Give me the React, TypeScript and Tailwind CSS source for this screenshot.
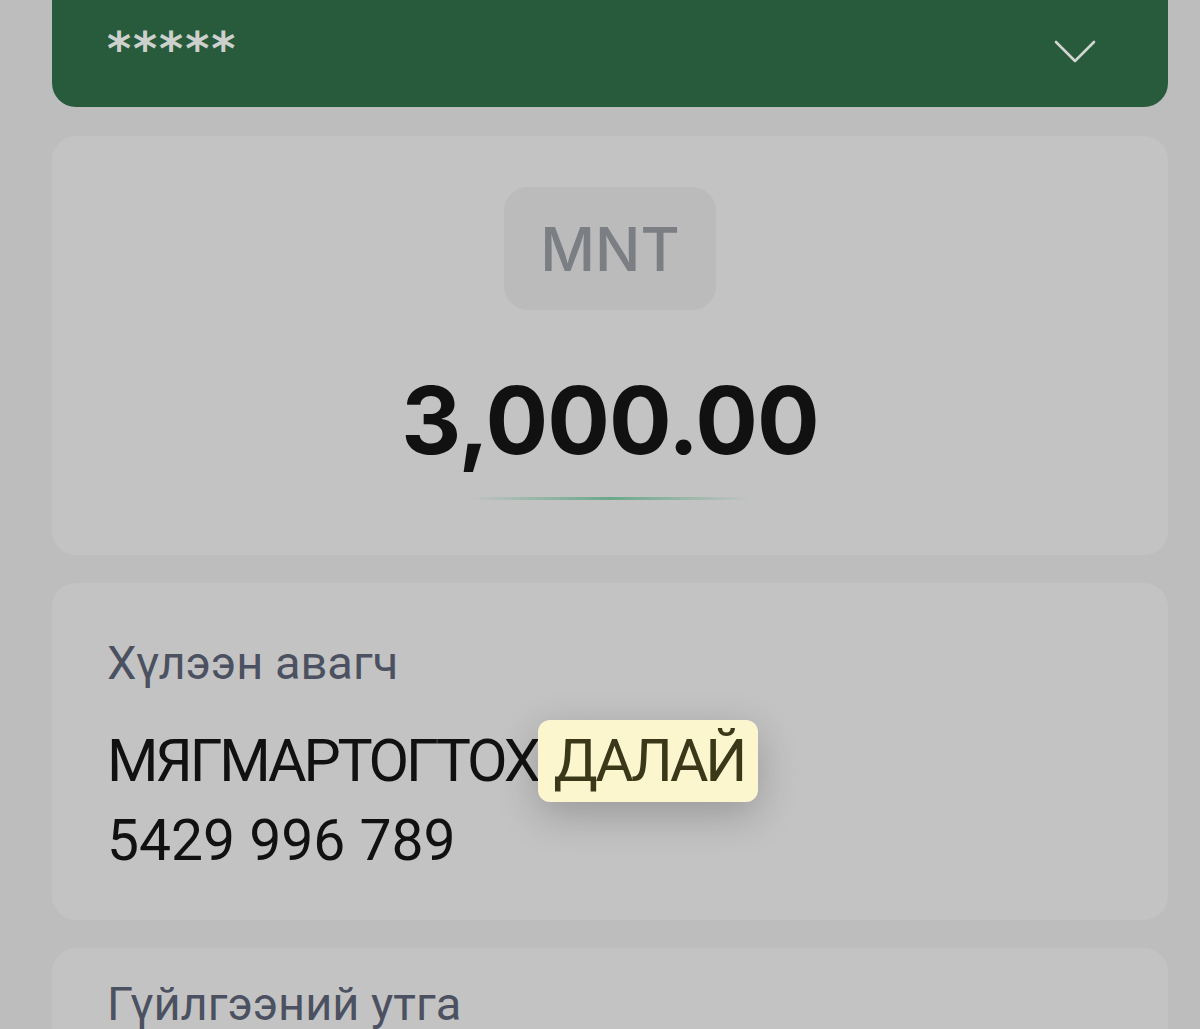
import React from 'react';

const Chevron = () => (
  <svg width="42" height="26" viewBox="0 0 42 26" fill="none" className="block">
    <polyline points="2,3 21,22 40,3" stroke="#d2d4d2" strokeWidth="2.6" strokeLinecap="round" strokeLinejoin="round" />
  </svg>
);

export default function App() {
  return (
    <div className="w-full h-[1029px] overflow-hidden bg-[#bdbdbd] pl-[52px] pr-[32px]" style={{ fontFamily: 'Inter, "Noto Sans", sans-serif' }}>
      {/* account selector */}
      <div className="mt-[-40px] h-[147px] rounded-[24px] bg-[#275b3b] flex items-end justify-between pl-[55px] pr-[72px] pb-[42px]">
        <span className="text-[46px] font-bold leading-none text-[#cdd1cd] tracking-[2px] mb-[-7px]" style={{ fontFamily: '"DejaVu Sans", sans-serif' }}>*****</span>
        <Chevron />
      </div>

      {/* amount */}
      <div className="mt-[29px] h-[419px] rounded-[24px] bg-[#c3c3c3] flex flex-col items-center pt-[51px]">
        <div className="w-[212px] h-[123px] rounded-[24px] bg-[#bbbbbb] flex items-center justify-center">
          <span className="text-[60px] font-medium text-[#7b7e82] leading-none">MNT</span>
        </div>
        <div className="mt-[64px] text-[93px] font-bold text-[#111111] leading-none tracking-[-1px]">3,000.00</div>
        <div className="mt-[30px] h-[3px] w-[280px] bg-[linear-gradient(90deg,rgba(110,170,140,0)_0%,#6aa88a_50%,rgba(110,170,140,0)_100%)]" />
      </div>

      {/* receiver */}
      <div className="mt-[28px] h-[337px] rounded-[24px] bg-[#c3c3c3] pl-[55px] pt-[56px]" style={{ fontFamily: 'Roboto, "Noto Sans", sans-serif' }}>
        <div className="text-[47px] leading-none text-[#4b5160]">Хүлээн авагч</div>
        <div className="mt-[34px] text-[59px] leading-[76px] text-[#111111] whitespace-nowrap tracking-[-3.2px]">
          МЯГМАРТОГТОХ
          <span className="relative inline-block pl-[16px] pr-[14px] rounded-[12px] bg-[#fcf6cf] text-[#3a3819] leading-[82px] shadow-[0_12px_40px_rgba(0,0,0,0.22)]">ДАЛАЙ</span>
        </div>
        <div className="text-[57px] leading-[70px] text-[#111111] mt-[4px]">5429 996 789</div>
      </div>

      {/* description */}
      <div className="mt-[28px] h-[200px] rounded-[24px] bg-[#c3c3c3] pl-[55px] pt-[32px]" style={{ fontFamily: 'Roboto, "Noto Sans", sans-serif' }}>
        <div className="text-[47px] leading-none text-[#4b5160]">Гүйлгээний утга</div>
      </div>
    </div>
  );
}
